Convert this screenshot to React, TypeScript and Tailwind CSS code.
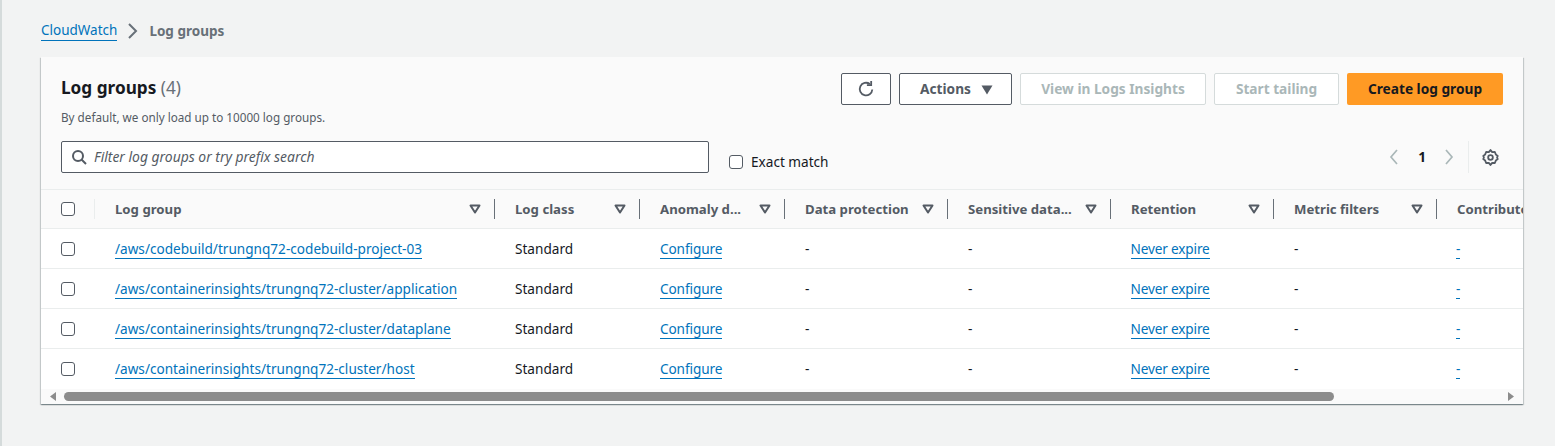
import React from 'react';

const groups = [
  '/aws/codebuild/trungnq72-codebuild-project-03',
  '/aws/containerinsights/trungnq72-cluster/application',
  '/aws/containerinsights/trungnq72-cluster/dataplane',
  '/aws/containerinsights/trungnq72-cluster/host',
];

const columns = [
  { label: 'Log group', width: 'w-[400px]' },
  { label: 'Log class', width: 'w-[145px]' },
  { label: 'Anomaly d...', width: 'w-[145px]' },
  { label: 'Data protection', width: 'w-[163px]' },
  { label: 'Sensitive data...', width: 'w-[163px]' },
  { label: 'Retention', width: 'w-[163px]' },
  { label: 'Metric filters', width: 'w-[163px]' },
];

const Checkbox = () => (
  <span className="block w-[14px] h-[14px] rounded-[3px] border border-[#545b64] bg-white" />
);

const SortIcon = () => (
  <svg width="12" height="10" viewBox="0 0 12 10" className="shrink-0">
    <path d="M1.5 1.5h9L6 8.5z" fill="none" stroke="#545b64" strokeWidth="2" strokeLinejoin="round" />
  </svg>
);

const TableLink = ({ children }: { children: React.ReactNode }) => (
  <a className="text-[#0073bb] border-b border-[#0073bb] leading-[18px]">{children}</a>
);

const HeaderCell = ({ label, width }: { label: string; width: string }) => (
  <div className={`${width} shrink-0 h-full flex items-center justify-between pl-5 pr-[14px] relative`}>
    <span className="font-bold text-[#545b64] text-[13.2px] whitespace-nowrap pt-[1px]">{label}</span>
    <SortIcon />
    <span className="absolute right-0 top-[9px] h-[20px] w-px bg-[#687078]" />
  </div>
);

const Row = ({ name, last }: { name: string; last: boolean }) => (
  <div className={`flex items-center h-10 bg-white text-[13.6px] text-[#16191f] border-b ${last ? 'border-transparent' : 'border-[#eaeded]'}`}>
    <div className="w-[54px] shrink-0 pl-5">
      <Checkbox />
    </div>
    <div className="w-[400px] shrink-0 pl-5 pt-[1px]">
      <TableLink>{name}</TableLink>
    </div>
    <div className="w-[145px] shrink-0 pl-5 pt-[1px]">Standard</div>
    <div className="w-[145px] shrink-0 pl-5 pt-[1px] tracking-[-0.1px]">
      <TableLink>Configure</TableLink>
    </div>
    <div className="w-[163px] shrink-0 pl-5 pt-[1px]">-</div>
    <div className="w-[163px] shrink-0 pl-5 pt-[1px]">-</div>
    <div className="w-[163px] shrink-0 pl-[19.5px] pt-[1px] tracking-[-0.15px]">
      <TableLink>Never expire</TableLink>
    </div>
    <div className="w-[163px] shrink-0 pl-5 pt-[1px]">-</div>
    <div className="shrink-0 pl-[19px] pt-[1px]">
      <TableLink>-</TableLink>
    </div>
  </div>
);

export default function App() {
  return (
    <div className="w-[1555px] h-[446px] overflow-hidden bg-[#f2f3f3] border-l-2 border-[#d5dbdb] pl-[39px] pr-[32px] pt-[21px] font-['Noto_Sans',sans-serif] text-[13.6px]">
      {/* breadcrumbs */}
      <nav className="flex items-center h-[20px] text-[13.5px]">
        <a className="text-[#0073bb] border-b border-[#0073bb] leading-[19px]">CloudWatch</a>
        <svg width="16" height="16" viewBox="0 0 16 16" className="ml-[8px] mr-[8px]">
          <path d="M4 1l7 7-7 7" fill="none" stroke="#687078" strokeWidth="2" />
        </svg>
        <span className="font-bold text-[#687078]">Log groups</span>
      </nav>

      {/* card */}
      <section className="mt-[16px] h-[347px] bg-white shadow-[0_1px_1px_0_rgba(0,28,36,0.3),1px_1px_1px_0_rgba(0,28,36,0.15),-1px_1px_1px_0_rgba(0,28,36,0.15)] overflow-hidden">
        <div className="bg-[#fafafa] h-[133px] border-b border-[#eaeded] relative pl-5 pr-5">
          <div className="flex justify-between pt-4">
            <div>
              <h1 className="text-[17.2px] leading-[24px] font-bold text-[#16191f] mt-[3px]">
                Log groups <span className="font-normal text-[#687078]">(4)</span>
              </h1>
              <p className="text-[11.7px] leading-[16px] text-[#545b64] mt-[9px]">
                By default, we only load up to 10000 log groups.
              </p>
            </div>
            <div className="flex gap-2 h-[32px] text-[13.7px] font-bold">
              <button className="w-[50px] flex items-center justify-center border border-[#545b64] rounded-[2px] bg-white">
                <svg width="18" height="18" viewBox="0 0 16 16" fill="none" stroke="#545b64" strokeWidth="1.6">
                  <path d="M13.6 8.4A5.6 5.6 0 1 1 11.4 3.6" />
                  <path d="M12.6 0.8v3.8H8.8" />
                </svg>
              </button>
              <button className="w-[113px] flex items-center justify-center gap-[10px] border border-[#545b64] rounded-[2px] bg-white text-[#545b64] pt-[1px] pl-[2px]">
                Actions
                <svg width="12" height="10" viewBox="0 0 12 10">
                  <path d="M0.5 0.5h11L6 9.5z" fill="#545b64" />
                </svg>
              </button>
              <button className="w-[186px] border border-[#d5dbdb] rounded-[2px] bg-white text-[#aab7b8] pt-[1px]">
                View in Logs Insights
              </button>
              <button className="w-[125px] border border-[#d5dbdb] rounded-[2px] bg-white text-[#aab7b8] pt-[1px]">
                Start tailing
              </button>
              <button className="w-[156px] rounded-[2px] bg-[#ff9a24] text-[#16191f] pt-[1px]">Create log group</button>
            </div>
          </div>

          <div className="flex items-start mt-[16px]">
            <div className="w-[648px] h-[32px] flex items-center bg-white border border-[#545b64] rounded-[2px] pl-[9px]">
              <svg width="16" height="16" viewBox="0 0 16 16" fill="none" stroke="#545b64" strokeWidth="2">
                <circle cx="7" cy="7" r="5" />
                <path d="M10.5 10.5L15 15" />
              </svg>
              <span className="ml-[7px] italic text-[#545b64] text-[13.9px]">Filter log groups or try prefix search</span>
            </div>
            <label className="flex items-center ml-[20px] mt-[11px] text-[#16191f]">
              <Checkbox />
              <span className="ml-2">Exact match</span>
            </label>
            <div className="ml-auto mr-[4px] flex items-center h-[32px] text-[#16191f]">
              <svg width="16" height="16" viewBox="0 0 16 16" fill="none" stroke="#aab7b8" strokeWidth="1.7">
                <path d="M11 1L5 8l6 7" />
              </svg>
              <span className="ml-[16px] mr-[15px] font-bold">1</span>
              <svg width="16" height="16" viewBox="0 0 16 16" fill="none" stroke="#aab7b8" strokeWidth="1.7">
                <path d="M5 1l6 7-6 7" />
              </svg>
              <span className="w-px h-[32px] bg-[#eaeded] ml-[11px] mr-[13px]" />
              <svg width="17" height="17" viewBox="0 0 16 16" fill="none" stroke="#545b64" strokeWidth="1.7">
                <path d="M8 1l1.6 2 2.5-.2.9 2.3 1.8 1.4L14.2 8l.6 1.5-1.8 1.4-.9 2.3-2.5-.2L8 15l-1.6-2-2.5.2-.9-2.3-1.8-1.4L1.8 8l-.6-1.5L3 5.1l.9-2.3 2.5.2z" strokeLinejoin="round" />
                <circle cx="8" cy="8" r="2.2" />
              </svg>
            </div>
          </div>
        </div>

        {/* table */}
        <div className="overflow-hidden">
          <div className="w-[1600px]">
            <div className="flex items-center h-[39px] bg-[#fafafa] border-b border-[#eaeded]">
              <div className="w-[54px] shrink-0 h-full flex items-center pl-5 relative">
                <Checkbox />
                <span className="absolute right-0 top-[9px] h-[20px] w-px bg-[#eaeded]" />
              </div>
              {columns.map((c) => (
                <HeaderCell key={c.label} label={c.label} width={c.width} />
              ))}
              <div className="pl-5 font-bold text-[#545b64] text-[13.2px] pt-[1px] whitespace-nowrap">Contributor Insights</div>
            </div>
            {groups.map((g, i) => (
              <Row key={g} name={g} last={i === groups.length - 1} />
            ))}
          </div>
        </div>

        {/* horizontal scrollbar */}
        <div className="h-[15px] bg-[#fafafa] flex items-center">
          <svg width="6" height="9" viewBox="0 0 6 9" className="ml-[9px]">
            <path d="M6 0v9L0 4.5z" fill="#8c8c8c" />
          </svg>
          <div className="ml-[8px] w-[1270px] h-[9px] rounded-full bg-[#8c8c8c]" />
          <svg width="6" height="9" viewBox="0 0 6 9" className="ml-auto mr-[9px]">
            <path d="M0 0v9l6-4.5z" fill="#8c8c8c" />
          </svg>
        </div>
      </section>
    </div>
  );
}
